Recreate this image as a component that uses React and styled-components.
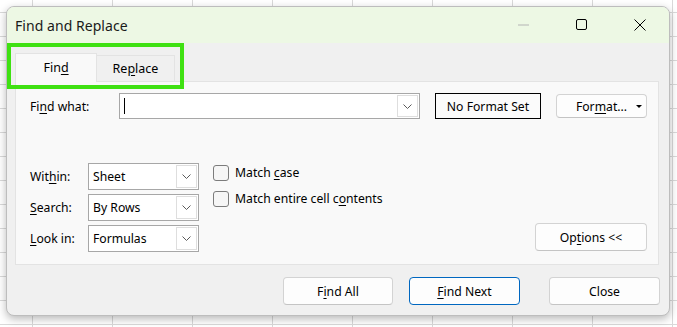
import React from "react";
import styled, { createGlobalStyle } from "styled-components";

const FS = "12.2px";

const Global = createGlobalStyle`
  * { box-sizing: border-box; }
  html, body { margin: 0; padding: 0; }
  body { font-family: "Noto Sans", "Open Sans", sans-serif; font-size: 12px; color: #000; }
`;

const Page = styled.div`
  position: relative;
  width: 677px;
  height: 327px;
  overflow: hidden;
  background-color: #fff;
  background-image: linear-gradient(to right, #d9d9d9 1px, transparent 1px),
    linear-gradient(to bottom, #d9d9d9 1px, transparent 1px);
  background-size: 80px 24px;
  background-position: 32px 12px;
`;

const Dialog = styled.div`
  position: absolute;
  left: 6px;
  top: 6px;
  width: 664px;
  height: 310px;
  border: 1px solid #bdbdbd;
  border-radius: 8px;
  background: #f0f0f0;
  box-shadow: 0 3px 9px rgba(0, 0, 0, 0.28);
  display: flex;
  flex-direction: column;
  overflow: hidden;
`;

const TitleBar = styled.div`
  height: 36px;
  flex: none;
  background: #edf8e4;
  display: flex;
  align-items: center;
  padding-left: 8px;
`;

const Title = styled.div`
  flex: 1;
  font-size: 14px;
  color: #1a1a1a;
  letter-spacing: 0.05px;
`;

const WinButton = styled.div`
  width: 58px;
  height: 36px;
  display: flex;
  align-items: center;
  justify-content: center;
`;

const Body = styled.div`
  flex: 1;
  display: flex;
  flex-direction: column;
  padding: 10px 10px 0 8px;
`;

const Tabs = styled.div`
  display: flex;
  align-items: flex-end;
  height: 28px;
`;

const Tab = styled.div`
  width: ${(p) => p.$w}px;
  height: ${(p) => (p.$active ? 29 : 26)}px;
  display: flex;
  align-items: center;
  justify-content: center;
  padding-bottom: ${(p) => (p.$active ? 2 : 0)}px;
  background: ${(p) => (p.$active ? "#f9f9f9" : "#f0f0f0")};
  border: 1px solid #e3e3e3;
  border-bottom: none;
  ${(p) => (p.$active ? "position: relative; z-index: 1; margin-bottom: -1px;" : "border-left: none;")}
  font-size: 12.5px;
`;

const Panel = styled.div`
  width: 644px;
  height: 184px;
  background: #f9f9f9;
  border: 1px solid #e3e3e3;
  padding: 11px 11px 11px 14px;
  display: flex;
  flex-direction: column;
`;

const FindRow = styled.div`
  display: flex;
  align-items: center;
  height: 26px;
`;

const Label = styled.div`
  width: ${(p) => p.$w}px;
  flex: none;
  font-size: ${FS};
`;

const Key = styled.u`
  text-decoration-thickness: 1px;
  text-underline-offset: 2px;
`;

const Combo = styled.div`
  width: ${(p) => p.$w}px;
  height: ${(p) => p.$h}px;
  flex: none;
  display: flex;
  background: #fff;
  border: 1px solid #a7a7a7;
`;

const ComboValue = styled.div`
  flex: 1;
  display: flex;
  align-items: center;
  padding-left: 4px;
  font-size: ${FS};
`;

const Caret = styled.span`
  display: block;
  width: 1px;
  height: 16px;
  background: #000;
`;

const ArrowBox = styled.div`
  width: 21px;
  margin: 1px;
  background: #fff;
  border: 1px solid #dedede;
  display: flex;
  align-items: center;
  justify-content: center;
`;

const FormatBox = styled.div`
  width: 106px;
  height: 26px;
  margin-left: 15px;
  border: 1px solid #000;
  background: #fbfbfb;
  display: flex;
  align-items: center;
  justify-content: center;
  font-size: ${FS};
`;

const Button = styled.div`
  position: relative;
  width: ${(p) => p.$w}px;
  height: ${(p) => p.$h || 28}px;
  margin-left: ${(p) => p.$ml || 0}px;
  margin-bottom: ${(p) => p.$mb || 0}px;
  flex: none;
  display: flex;
  align-items: center;
  justify-content: center;
  background: #fdfdfd;
  border: 1px solid ${(p) => (p.$primary ? "#0067c0" : "#d3d3d3")};
  border-bottom-color: ${(p) => (p.$primary ? "#0067c0" : "#c4c4c4")};
  border-radius: 4px;
  font-size: ${FS};
`;

const DropTri = styled.span`
  position: absolute;
  right: 4px;
  top: 10px;
  width: 0;
  height: 0;
  border-left: 3px solid transparent;
  border-right: 3px solid transparent;
  border-top: 3px solid #000;
`;

const Lower = styled.div`
  margin-top: 44px;
  display: flex;
  align-items: flex-end;
`;

const Selects = styled.div`
  display: flex;
  flex-direction: column;
  gap: 4px;
`;

const SelectRow = styled.div`
  display: flex;
  align-items: center;
`;

const Checks = styled.div`
  flex: 1;
  align-self: flex-start;
  margin-left: 14px;
  padding-top: 1px;
  display: flex;
  flex-direction: column;
  gap: 9px;
`;

const CheckRow = styled.div`
  display: flex;
  align-items: center;
  gap: 6px;
  font-size: ${FS};
`;

const CheckBox = styled.span`
  width: 16px;
  height: 16px;
  border: 1px solid #7c7c7c;
  border-radius: 3px;
  background: #f6f6f6;
`;

const Footer = styled.div`
  display: flex;
  align-items: center;
  padding: 12px 0 0 268px;
`;

const Highlight = styled.div`
  position: absolute;
  left: 7px;
  top: 43px;
  width: 177px;
  height: 46px;
  border: 4px solid #3fe112;
  pointer-events: none;
`;

const Chevron = () => (
  <svg width="9" height="5" viewBox="0 0 9 5">
    <polyline points="0.5,0.5 4.5,4.5 8.5,0.5" fill="none" stroke="#5a5a5a" strokeWidth="1" />
  </svg>
);

const Select = ({ value }) => (
  <Combo $w={111} $h={27}>
    <ComboValue>{value}</ComboValue>
    <ArrowBox>
      <Chevron />
    </ArrowBox>
  </Combo>
);

export default function App() {
  return (
    <>
      <Global />
      <Page>
        <Dialog>
          <TitleBar>
            <Title>Find and Replace</Title>
            <WinButton>
              <svg width="12" height="2" viewBox="0 0 12 2">
                <line x1="0" y1="1" x2="11" y2="1" stroke="#b4b4b4" strokeWidth="1" />
              </svg>
            </WinButton>
            <WinButton>
              <svg width="12" height="12" viewBox="0 0 12 12">
                <rect x="0.5" y="0.5" width="10" height="10" rx="1.5" fill="none" stroke="#000" strokeWidth="1" />
              </svg>
            </WinButton>
            <WinButton>
              <svg width="12" height="12" viewBox="0 0 12 12">
                <path d="M0.5 0.5 L11.5 11.5 M11.5 0.5 L0.5 11.5" stroke="#000" strokeWidth="1" />
              </svg>
            </WinButton>
          </TitleBar>
          <Body>
            <Tabs>
              <Tab $active $w={82}>
                <span>
                  Fin<Key>d</Key>
                </span>
              </Tab>
              <Tab $w={78}>
                <span>
                  Re<Key>p</Key>lace
                </span>
              </Tab>
            </Tabs>
            <Panel>
              <FindRow>
                <Label $w={89}>
                  Fi<Key>n</Key>d what:
                </Label>
                <Combo $w={301} $h={26}>
                  <ComboValue>
                    <Caret />
                  </ComboValue>
                  <ArrowBox>
                    <Chevron />
                  </ArrowBox>
                </Combo>
                <FormatBox>No Format Set</FormatBox>
                <Button $w={91} $h={24} $ml={15}>
                  <span>
                    For<Key>m</Key>at...
                  </span>
                  <DropTri />
                </Button>
              </FindRow>
              <Lower>
                <Selects>
                  <SelectRow>
                    <Label $w={58}>
                      Wit<Key>h</Key>in:
                    </Label>
                    <Select value="Sheet" />
                  </SelectRow>
                  <SelectRow>
                    <Label $w={58}>
                      <Key>S</Key>earch:
                    </Label>
                    <Select value="By Rows" />
                  </SelectRow>
                  <SelectRow>
                    <Label $w={58}>
                      <Key>L</Key>ook in:
                    </Label>
                    <Select value="Formulas" />
                  </SelectRow>
                </Selects>
                <Checks>
                  <CheckRow>
                    <CheckBox />
                    <span>
                      Match <Key>c</Key>ase
                    </span>
                  </CheckRow>
                  <CheckRow>
                    <CheckBox />
                    <span>
                      Match entire cell c<Key>o</Key>ntents
                    </span>
                  </CheckRow>
                </Checks>
                <Button $w={112} $h={28} $mb={1}>
                  <span>
                    Op<Key>t</Key>ions &lt;&lt;
                  </span>
                </Button>
              </Lower>
            </Panel>
            <Footer>
              <Button $w={110}>
                <span>
                  F<Key>i</Key>nd All
                </span>
              </Button>
              <Button $w={111} $ml={16} $primary>
                <span>
                  <Key>F</Key>ind Next
                </span>
              </Button>
              <Button $w={111} $ml={29}>
                Close
              </Button>
            </Footer>
          </Body>
        </Dialog>
        <Highlight />
      </Page>
    </>
  );
}
